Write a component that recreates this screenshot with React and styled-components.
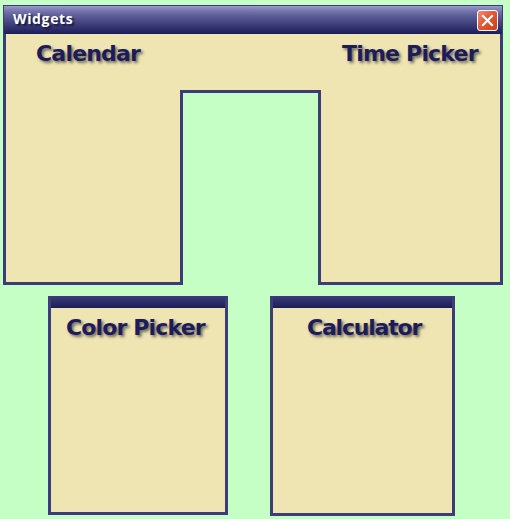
import React from "react";
import styled, { createGlobalStyle } from "styled-components";

const LINE = "#3c3c78";
const SAND = "#efe5b3";
const MINT = "#c6ffc6";

const GlobalStyle = createGlobalStyle`
  * { box-sizing: border-box; }
  body { margin: 0; background: ${MINT}; }
`;

const Desktop = styled.main`
  width: 510px;
  height: 519px;
  padding: 5px 7px 0 3px;
  overflow: hidden;
  background: ${MINT};
`;

const Window = styled.section`
  display: flex;
  flex-direction: column;
  width: 500px;
  height: 280px;
`;

const TitleBar = styled.header`
  display: flex;
  justify-content: space-between;
  align-items: flex-start;
  height: 29px;
  flex: none;
  padding: 4px 4px 0 9px;
  border: 1px solid ${LINE};
  border-bottom: 0;
  background: linear-gradient(#9999cc 0, #7c7cb3 4px, #60609a 9px, #3f3f7b 18px, #1c1c58 28px);
`;

const Title = styled.h1`
  margin: 0;
  font: bold 14px/18px "Open Sans", sans-serif;
  letter-spacing: 0.65px;
  color: #fff;
  text-shadow: 2px 2px 2px #15153f;
`;

const CloseButton = styled.button`
  display: block;
  width: 21px;
  height: 21px;
  padding: 0;
  border: 0;
  background: none;
  svg { display: block; }
`;

const Body = styled.div`
  display: grid;
  grid-template-columns: 180px 135px 185px;
  flex: 1;
`;

const Leg = styled.div`
  display: flex;
  justify-content: ${(p) => (p.$side === "left" ? "space-between" : "flex-start")};
  align-items: flex-start;
  border: 3px solid ${LINE};
  border-top: 0;
  ${(p) => (p.$side === "left" ? "border-right" : "border-left")}: 0;
  background: ${SAND};
`;

const LegEdge = styled.span`
  width: 3px;
  height: 192px;
  flex: none;
  align-self: flex-end;
  background: ${LINE};
  order: ${(p) => (p.$side === "left" ? 1 : -1)};
`;

const Bridge = styled.div`
  height: 59px;
  border-bottom: 3px solid ${LINE};
  background: ${SAND};
`;

const Label = styled.h2`
  margin: 6px 0 0 ${(p) => p.$offset}px;
  font: bold 22px/28px "DejaVu Sans", sans-serif;
  letter-spacing: ${(p) => p.$tracking}px;
  white-space: nowrap;
  color: #1c1c5c;
  text-shadow: 2px 2px 3px rgba(40, 40, 40, 0.65);
`;

const PanelRow = styled.div`
  display: flex;
  gap: 42px;
  align-items: flex-start;
  margin: 11px 0 0 45px;
`;

const Panel = styled.section`
  width: ${(p) => p.$width}px;
  height: ${(p) => p.$height}px;
  border: 3px solid ${LINE};
  border-top: 0;
  background: ${SAND};
`;

const PanelBar = styled.div`
  height: 12px;
  background: linear-gradient(#3c3c78, #1c1c58);
`;

function CloseIcon() {
  return (
    <svg width="21" height="21" viewBox="0 0 21 21">
      <defs>
        <linearGradient id="closeRed" x1="0" y1="0" x2="1" y2="1">
          <stop offset="0" stopColor="#f0937a" />
          <stop offset="0.45" stopColor="#e25a38" />
          <stop offset="1" stopColor="#cf3c10" />
        </linearGradient>
      </defs>
      <rect x="0.5" y="0.5" width="20" height="20" rx="2.5" fill="url(#closeRed)" stroke="#fff" />
      <path d="M6 6L15 15M15 6L6 15" stroke="#fff" strokeWidth="2.2" strokeLinecap="square" />
    </svg>
  );
}

export default function App() {
  return (
    <>
      <GlobalStyle />
      <Desktop>
        <Window>
          <TitleBar>
            <Title>Widgets</Title>
            <CloseButton aria-label="Close">
              <CloseIcon />
            </CloseButton>
          </TitleBar>
          <Body>
            <Leg $side="left">
              <Label $offset={30} $tracking={-0.8}>Calendar</Label>
              <LegEdge $side="left" />
            </Leg>
            <Bridge />
            <Leg $side="right">
              <Label $offset={21} $tracking={-0.8}>Time Picker</Label>
              <LegEdge $side="right" />
            </Leg>
          </Body>
        </Window>
        <PanelRow>
          <Panel $width={180} $height={219}>
            <PanelBar />
            <Label $offset={15} $tracking={-0.85}>Color Picker</Label>
          </Panel>
          <Panel $width={185} $height={220}>
            <PanelBar />
            <Label $offset={34} $tracking={-1.2}>Calculator</Label>
          </Panel>
        </PanelRow>
      </Desktop>
    </>
  );
}
